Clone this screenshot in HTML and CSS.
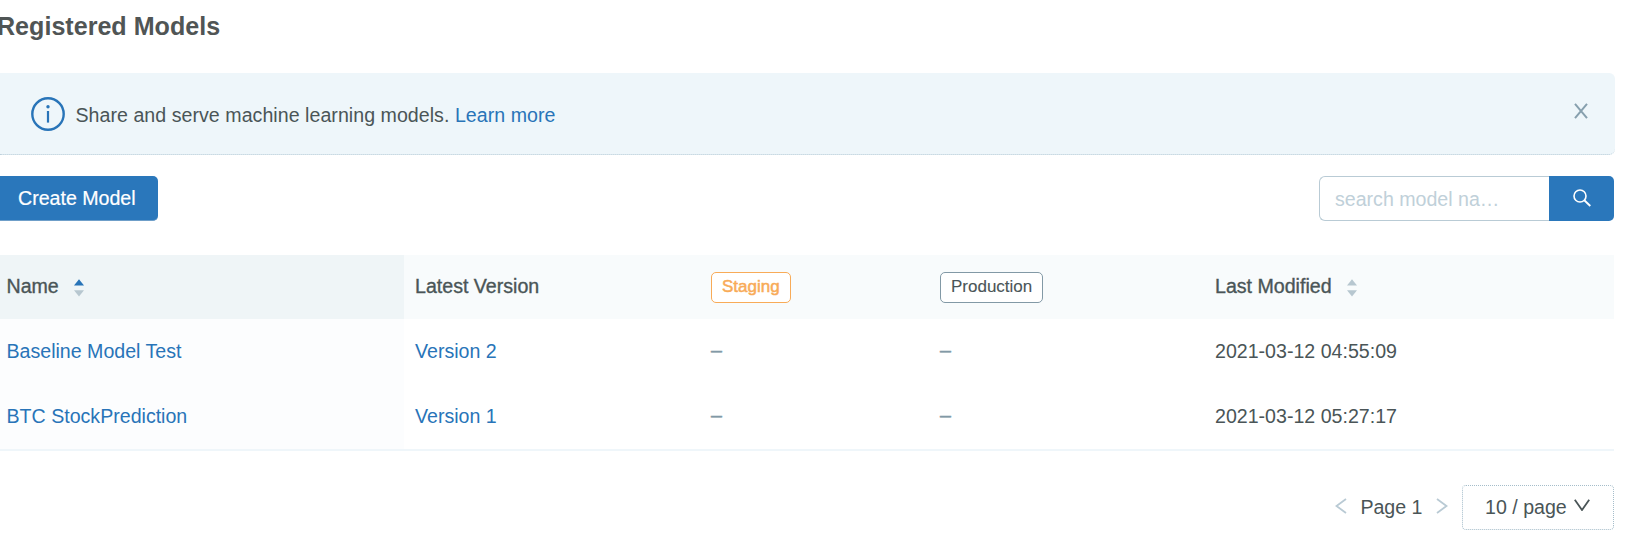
FILE: index.html
```html
<!DOCTYPE html>
<html lang="en">
<head>
<meta charset="utf-8">
<title>Registered Models</title>
<link rel="stylesheet" href="styles.css">
</head>
<body>
<main class="page">
  <h1 class="title">Registered Models</h1>
  <div class="alert">
    <svg class="alert-icon" viewBox="0 0 34 34"><circle cx="17" cy="17" r="15.7" fill="none" stroke="currentColor" stroke-width="2.4"/><path d="M17 14v11.6" stroke="currentColor" stroke-width="2.2"/><circle cx="17" cy="9.8" r="1.7" fill="currentColor"/></svg>
    <p class="alert-text">Share and serve machine learning models. <a class="link" href="#">Learn more</a></p>
    <svg class="alert-close" viewBox="0 0 14 16"><path d="M1 .8L13 15.2M13 .8L1 15.2" fill="none" stroke="currentColor" stroke-width="2"/></svg>
  </div>
  <div class="toolbar">
    <button class="create">Create Model</button>
    <div class="search">
      <div class="search-field">search model na…</div>
      <button class="search-button" aria-label="Search"><svg class="search-icon" viewBox="0 0 18 18"><circle cx="7" cy="7" r="6" fill="none" stroke="currentColor" stroke-width="1.6"/><path d="M11.3 11.3L17.3 17" stroke="currentColor" stroke-width="1.9"/></svg></button>
    </div>
  </div>
  <table class="models">
    <colgroup><col class="c-name"><col class="c-version"><col class="c-staging"><col class="c-production"><col></colgroup>
    <thead>
      <tr>
        <th class="sorted"><span class="head">Name<svg class="sorter asc" viewBox="0 0 10 18"><path class="up" d="M0 6.5L5 .2l5 6.3z"/><path class="down" d="M0 11.3h10l-5 6.3z"/></svg></span></th>
        <th>Latest Version</th>
        <th><span class="tag staging">Staging</span></th>
        <th><span class="tag production">Production</span></th>
        <th><span class="head">Last Modified<svg class="sorter" viewBox="0 0 10 18"><path class="up" d="M0 6.5L5 .2l5 6.3z"/><path class="down" d="M0 11.3h10l-5 6.3z"/></svg></span></th>
      </tr>
    </thead>
    <tbody>
      <tr><td class="sorted"><a class="link" href="#">Baseline Model Test</a></td><td><a class="link" href="#">Version 2</a></td><td class="none">–</td><td class="none">–</td><td>2021-03-12 04:55:09</td></tr>
      <tr><td class="sorted"><a class="link" href="#">BTC StockPrediction</a></td><td><a class="link" href="#">Version 1</a></td><td class="none">–</td><td class="none">–</td><td>2021-03-12 05:27:17</td></tr>
    </tbody>
  </table>
  <div class="pagination">
    <svg class="chevron" viewBox="0 0 12 16"><path d="M11 1L1.5 8l9.500 7" fill="none" stroke="currentColor" stroke-width="1.8"/></svg>
    <span class="current">Page 1</span>
    <svg class="chevron" viewBox="0 0 12 16"><path d="M1 1l9.500 7L1 15" fill="none" stroke="currentColor" stroke-width="1.8"/></svg>
    <div class="page-size">10 / page<svg class="arrow" viewBox="0 0 16 12"><path d="M.8.8L8 11 15.200.8" fill="none" stroke="currentColor" stroke-width="1.8"/></svg></div>
  </div>
</main>
</body>
</html>
```
FILE: styles.css
```css
* { box-sizing: border-box; }
body { margin: 0; background: #fff; overflow: hidden; }
.page {
  width: 1615px;
  height: 540px;
  font: 19.6px/28px "Liberation Sans", Arial, sans-serif;
  color: #4a5557;
}
.title { margin: 0 0 0 -3px; padding-top: 12px; height: 73px; font-size: 25.1px; line-height: 28px; color: #505555; white-space: nowrap; }
.link { color: #2874b8; text-decoration: none; }
.alert {
  display: flex;
  align-items: flex-start;
  height: 82px;
  padding: 24px 27px 0 31px;
  background: #eef6fa;
  border-bottom: 1px dotted #b3c9d5;
  border-radius: 0 6px 6px 0;
}
.alert-icon { width: 34px; height: 34px; color: #2874b8; }
.alert-text { margin: 4px 0 0 10.5px; flex: 1; letter-spacing: .035px; }
.alert-close { width: 14px; height: 16px; margin: 6px 0 0; color: #87a0ae; }
.toolbar { display: flex; justify-content: space-between; height: 100px; padding: 21px 1px 0 0; }
button { font: inherit; border: 0; margin: 0; color: #fff; background: #2a77bb; }
.create { width: 158px; height: 45px; padding: 0 0 0 18px; text-align: left; border-radius: 0 5px 5px 0; border-bottom: 1px solid #6f9fc9; -webkit-text-stroke: .2px currentColor; }
.search { display: flex; height: 45px; }
.search-field { width: 230px; padding: 8px 15px; border: 1px solid #b9cbd5; border-right: 0; border-radius: 6px 0 0 6px; color: #c0d0d9; white-space: nowrap; }
.search-button { display: flex; width: 65px; height: 45px; padding: 13px 0 0 24px; border-radius: 0 5px 5px 0; }
.search-icon { width: 18px; height: 18px; }
.models { width: 1614px; table-layout: fixed; border-collapse: separate; border-spacing: 0; border-bottom: 2px solid #eff6fa; }
.c-name { width: 404px; }
.c-version { width: 296px; }
.c-staging { width: 229px; }
.c-production { width: 275px; }
th, td { height: 65px; padding: 0 0 1px 11px; text-align: left; vertical-align: middle; font-weight: 400; white-space: nowrap; }
th { height: 64px; padding-bottom: 3px; background: #f8fbfc; -webkit-text-stroke: .35px currentColor; }
th.sorted { background: #eff5f7; }
td.sorted { background: #fcfdfe; }
th.sorted, td.sorted { padding-left: 6.5px; }
.head { display: flex; align-items: center; gap: 15px; }
.sorter { width: 10px; height: 18px; margin-top: 4px; fill: #b7c7d0; -webkit-text-stroke: 0; }
.asc .up { fill: #2874b8; }
.tag { display: block; width: 80px; height: 31px; margin-top: 3px; padding-left: 10px; border: 1px solid #f8ab58; border-radius: 5px; background: #fff; color: #f8ab58; font-size: 17px; line-height: 27px; -webkit-text-stroke: .5px currentColor; }
.production { width: 103px; border-color: #8299a6; color: #4a5557; -webkit-text-stroke: .1px currentColor; }
td.none { padding-bottom: 3px; color: #8299a6; -webkit-text-stroke: .5px currentColor; }
.pagination { display: flex; justify-content: flex-end; padding: 34px 1px 0 0; }
.chevron { width: 12px; height: 16px; margin-top: 13px; color: #b9cad4; }
.current { margin: 8px 13.5px 0 13.5px; }
.page-size { display: flex; width: 152px; height: 45px; margin-left: 14px; padding: 7px 0 0 22px; border: 1px dotted #a5bdca; border-radius: 4px; white-space: nowrap; }
.arrow { width: 16px; height: 12px; margin: 6px 0 0 7px; }
```
